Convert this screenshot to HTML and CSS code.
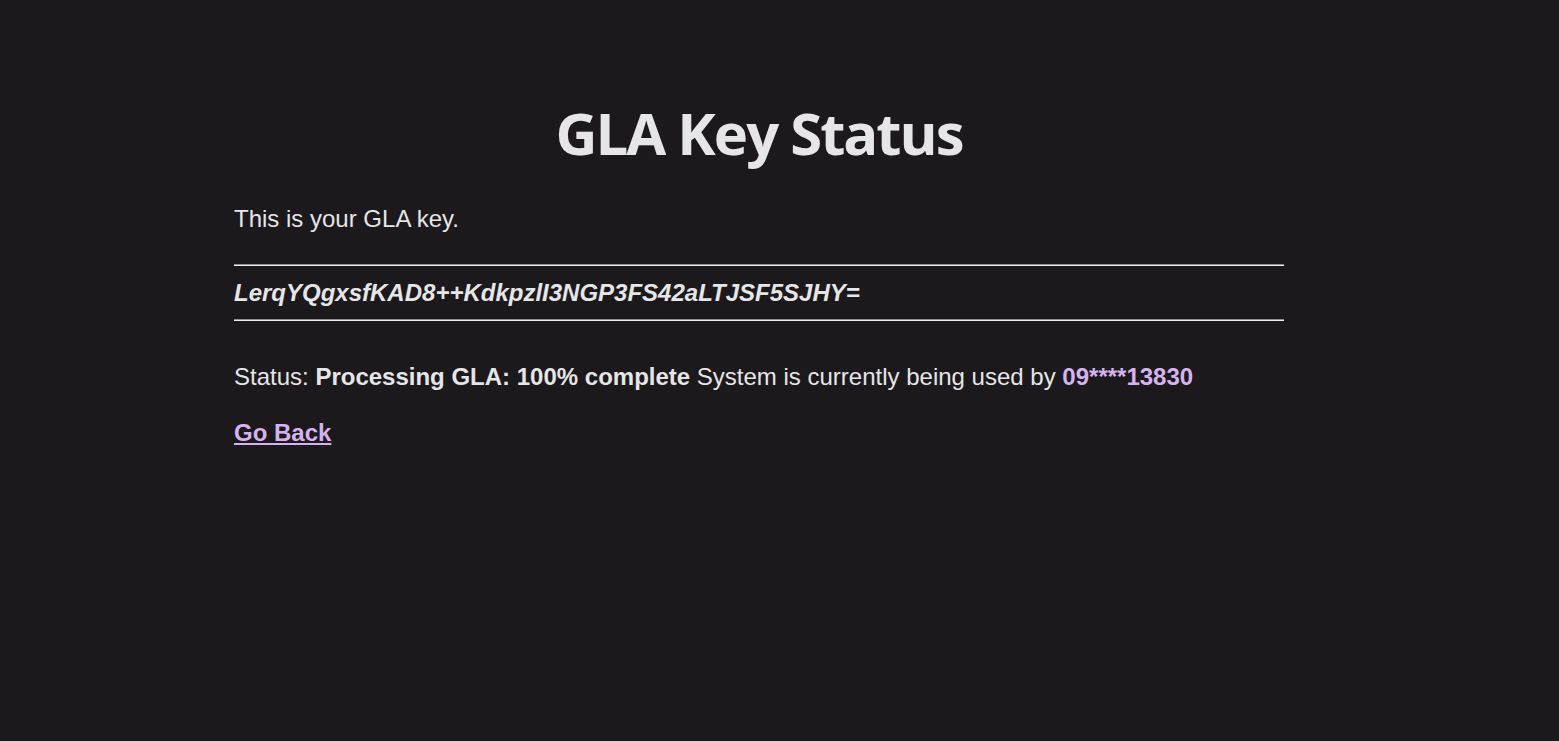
FILE: index.html
```html
<!DOCTYPE html>
<html lang="en">

<head>
    <meta charset="UTF-8">
    <meta name="viewport" content="width=device-width, initial-scale=1.0">
    <title>GLA Key Status</title>
    <link rel="stylesheet" href="styles.css">
</head>

<body>
    <div class="container">
        <h1>GLA Key Status</h1>
        <p class="intro">This is your GLA key.</p>
        <hr>
        <p class="key"><b><i>LerqYQgxsfKAD8++KdkpzlI3NGP3FS42aLTJSF5SJHY=</i></b></p>
        <hr>
        <p class="status">Status: <b>Processing GLA: 100% complete</b> System is currently being used by <b class="user">09****13830</b></p>
        <p><a href="#" class="back">Go Back</a></p>
    </div>
</body>

</html>
```

FILE: styles.css
```css
body {
    margin: 0;
    padding: 0 41px 0 0;
    background-color: #1b191c;
    color: #e6e5e7;
    font-family: "Liberation Sans", Arial, sans-serif;
    font-size: 24px;
}

.container {
    width: 1050px;
    margin: 0 auto;
    padding-top: 93px;
}

h1 {
    font-family: "Open Sans", sans-serif;
    font-weight: 700;
    font-size: 58px;
    line-height: 79px;
    text-align: center;
    margin: 0 0 33px 0;
    letter-spacing: -2px;
}

p {
    margin: 0;
    line-height: 27px;
}

.intro {
    margin-bottom: 32px;
}

hr {
    margin: 0;
    height: 0;
    border: none;
    border-top: 1px solid #8f8f8f;
    border-bottom: 1px solid #ededed;
}

.key {
    margin: 13px 0 13px 0;
}

.status {
    margin: 42px 0 29px 0;
}

.user {
    color: #d6b3ef;
}

.back {
    color: #d6b3ef;
    font-weight: bold;
}
```
